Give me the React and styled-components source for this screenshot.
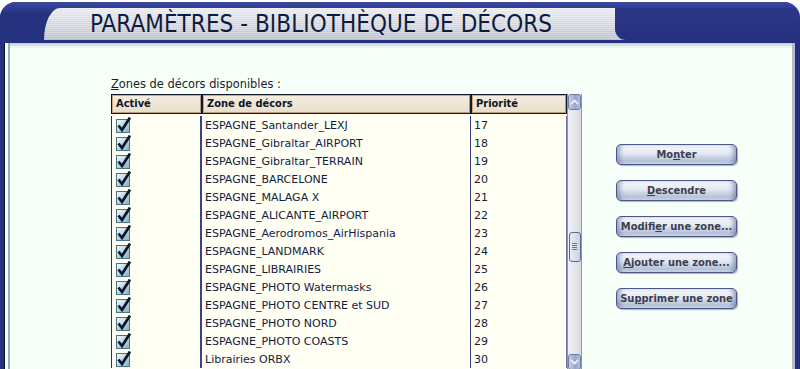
import React from "react";
import styled, { createGlobalStyle } from "styled-components";

const zones = [
  ["ESPAGNE_Santander_LEXJ", 17],
  ["ESPAGNE_Gibraltar_AIRPORT", 18],
  ["ESPAGNE_Gibraltar_TERRAIN", 19],
  ["ESPAGNE_BARCELONE", 20],
  ["ESPAGNE_MALAGA X", 21],
  ["ESPAGNE_ALICANTE_AIRPORT", 22],
  ["ESPAGNE_Aerodromos_AirHispania", 23],
  ["ESPAGNE_LANDMARK", 24],
  ["ESPAGNE_LIBRAIRIES", 25],
  ["ESPAGNE_PHOTO Watermasks", 26],
  ["ESPAGNE_PHOTO CENTRE et SUD", 27],
  ["ESPAGNE_PHOTO NORD", 28],
  ["ESPAGNE_PHOTO COASTS", 29],
  ["Librairies ORBX", 30],
];

const buttons = [
  ["Mo", "n", "ter"],
  ["", "D", "escendre"],
  ["Modifi", "e", "r une zone..."],
  ["", "A", "jouter une zone..."],
  ["Su", "p", "primer une zone"],
];

const Check = () => (
  <svg width="15" height="16" viewBox="0 0 15 16">
    <defs>
      <linearGradient id="cb" x1="0" y1="0" x2="1" y2="1">
        <stop offset="0" stopColor="#f4fbfb" />
        <stop offset="1" stopColor="#7fb2bb" />
      </linearGradient>
    </defs>
    <rect x="0.5" y="2.5" width="13" height="13" fill="url(#cb)" stroke="#4d7482" />
    <path
      d="M2.5 8.5 L6 13 L14 0.5"
      fill="none"
      stroke="#0b1430"
      strokeWidth="2.7"
      strokeLinejoin="miter"
    />
  </svg>
);

const Arrow = ({ up }) => (
  <svg width="9" height="6" viewBox="0 0 9 6">
    <path
      d={up ? "M1 5 L4.5 1.5 L8 5" : "M1 1 L4.5 4.5 L8 1"}
      fill="none"
      stroke="#f4f6fb"
      strokeWidth="1.6"
    />
  </svg>
);

export default function App() {
  return (
    <>
      <GlobalStyle />
      <Frame>
        <Header>
          <Tab>
            <Title>PARAMÈTRES - BIBLIOTHÈQUE DE DÉCORS</Title>
            <RightCap />
          </Tab>
        </Header>
        <Panel>
          <ListColumn>
            <Label>
              <u>Z</u>ones de décors disponibles :
            </Label>
            <ListBox>
              <Table>
                <HeadRow>
                  <HeadCell>Activé</HeadCell>
                  <HeadCell>Zone de décors</HeadCell>
                  <HeadCell>Priorité</HeadCell>
                </HeadRow>
                <Body>
                  {zones.map(([name, prio]) => (
                    <Row key={name}>
                      <CheckCell>
                        <Check />
                      </CheckCell>
                      <NameCell>{name}</NameCell>
                      <PrioCell>{prio}</PrioCell>
                    </Row>
                  ))}
                </Body>
              </Table>
              <Scrollbar>
                <ScrollButton>
                  <Arrow up />
                </ScrollButton>
                <Track>
                  <Thumb>
                    <Grip />
                  </Thumb>
                </Track>
                <ScrollButton>
                  <Arrow />
                </ScrollButton>
              </Scrollbar>
            </ListBox>
          </ListColumn>
          <ButtonColumn>
            {buttons.map(([a, key, b]) => (
              <Button key={a + key + b}>
                {a}
                <u>{key}</u>
                {b}
              </Button>
            ))}
          </ButtonColumn>
        </Panel>
      </Frame>
    </>
  );
}

const GlobalStyle = createGlobalStyle`
  body {
    margin: 0;
    background: #ffffff;
    font-family: "DejaVu Sans", Verdana, sans-serif;
  }
`;

const Frame = styled.div`
  width: 800px;
  height: 367px;
  margin-top: 2px;
  background: #25307f;
  border-radius: 16px 16px 0 0;
  overflow: hidden;
  display: flex;
  flex-direction: column;
`;

// title bar
const Header = styled.div`
  height: 41px;
  padding: 6px 0 3px 44px;
  box-sizing: border-box;
  display: flex;
  background: linear-gradient(to bottom, #3b48a0, #25307f 30%);
`;

const Tab = styled.div`
  flex: 1;
  display: flex;
  border-radius: 16px 0 0 0 / 32px 0 0 0;
  background: repeating-linear-gradient(
      to bottom,
      rgba(255, 255, 255, 0.35) 0 1px,
      rgba(0, 0, 0, 0) 1px 2px
    ),
    linear-gradient(to bottom, #e9eaf1, #d2d4de 55%, #b9bccb);
`;

const Title = styled.h1`
  flex: 1;
  margin: 0;
  padding-left: 46px;
  font-family: "DejaVu Sans Condensed", "DejaVu Sans", sans-serif;
  font-weight: normal;
  font-size: 24px;
  line-height: 32px;
  letter-spacing: 0.05px;
  color: #0f1b3d;
  white-space: nowrap;
`;

const RightCap = styled.div`
  width: 185px;
  background: linear-gradient(to bottom, #2a3688, #25307f);
  border-radius: 0 0 0 11px;
`;

// main area
const Panel = styled.div`
  flex: 1;
  margin: 0 5px 0 4px;
  padding: 34px 0 0 106px;
  display: flex;
  background: #f6fff8;
  border-left: 1px solid #0c1028;
  box-shadow: inset 3px 0 0 #f6fff8, inset 5px 0 0 #8db6c4,
    inset -3px 0 0 #b7bbc9, inset 0 4px 4px -2px rgba(70, 80, 120, 0.35);
`;

const ListColumn = styled.div`
  display: flex;
  flex-direction: column;
`;

const Label = styled.div`
  font-size: 11.4px;
  line-height: 14px;
  color: #1a1d2e;
  margin-bottom: 3px;
`;

const ListBox = styled.div`
  display: flex;
`;

const Table = styled.div`
  display: flex;
  flex-direction: column;
  background: #fffff4;
`;

const HeadRow = styled.div`
  display: grid;
  grid-template-columns: 91px 269px 96px;
  height: 20px;
  background: #f6fff8;
`;

const HeadCell = styled.div`
  border: 1px solid #14182c;
  box-shadow: inset 1px 1px 0 #d5a67a, inset -1px -1px 0 #b99a7c;
  background: linear-gradient(to bottom, #f4eee2, #e8ddc8);
  padding-left: 4px;
  font-family: "DejaVu Sans Condensed", "DejaVu Sans", sans-serif;
  font-weight: bold;
  font-size: 11px;
  line-height: 17px;
  color: #0e1426;
  white-space: nowrap;
  overflow: hidden;
`;

const Body = styled.div`
  padding-top: 2px;
  display: flex;
  flex-direction: column;
  background: #fffff4;
`;

const Row = styled.div`
  display: grid;
  grid-template-columns: 91px 269px 96px;
  height: 18px;
`;

const Cell = styled.div`
  display: flex;
  align-items: center;
  font-size: 11px;
  color: #141c3e;
  white-space: nowrap;
  box-sizing: border-box;
`;

const CheckCell = styled(Cell)`
  border-left: 1px solid #2a3070;
  border-right: 2px solid #3a4288;
  padding-left: 4px;
  padding-bottom: 1px;
`;

const NameCell = styled(Cell)`
  border-right: 1px solid #353c80;
  padding-left: 3px;
`;

const PrioCell = styled(Cell)`
  border-right: 1px solid #6b72a8;
  padding-left: 3px;
`;

// scrollbar
const Scrollbar = styled.div`
  width: 13px;
  height: 276px;
  display: flex;
  flex-direction: column;
  background: linear-gradient(to right, #f2f2f5, #d9dae2);
  border-left: 1px solid #8c92bc;
  border-right: 1px solid #8c92bc;
`;

const ScrollButton = styled.div`
  height: 16px;
  display: flex;
  align-items: center;
  justify-content: center;
  border: 1px solid #6f7aa6;
  border-radius: 3px;
  box-sizing: border-box;
  background: linear-gradient(to right, #c7cfe2, #97a5c9 60%, #b8c3dd);
`;

const Track = styled.div`
  flex: 1;
  padding-top: 122px;
  display: flex;
  flex-direction: column;
  align-items: center;
`;

const Thumb = styled.div`
  width: 12px;
  height: 30px;
  box-sizing: border-box;
  border: 1px solid #5a6a98;
  border-radius: 3px;
  background: linear-gradient(to right, #e8ecf5, #c9d1e4);
  display: flex;
  align-items: center;
  justify-content: center;
`;

const Grip = styled.div`
  width: 5px;
  height: 8px;
  background: repeating-linear-gradient(
    to bottom,
    #6a7598 0 1px,
    transparent 1px 2px
  );
`;

// buttons
const ButtonColumn = styled.div`
  margin-left: 34px;
  padding-top: 67px;
  display: flex;
  flex-direction: column;
  gap: 15px;
`;

const Button = styled.button`
  width: 121px;
  height: 21px;
  padding: 0;
  border: 1px solid #4a5588;
  border-radius: 5px;
  background: linear-gradient(
    to bottom,
    #f6f8fc,
    #e3e8f2 45%,
    #cfd6e6 60%,
    #b7c1d9 85%,
    #dfe5f1
  );
  box-shadow: inset 5px 0 4px -2px rgba(90, 110, 160, 0.55),
    inset -5px 0 4px -2px rgba(90, 110, 160, 0.55),
    1px 1px 1px rgba(40, 50, 90, 0.35);
  font-family: "DejaVu Sans Condensed", "DejaVu Sans", sans-serif;
  font-weight: bold;
  font-size: 11px;
  color: #3a3f4f;
  white-space: nowrap;
  overflow: hidden;
  cursor: pointer;
`;
